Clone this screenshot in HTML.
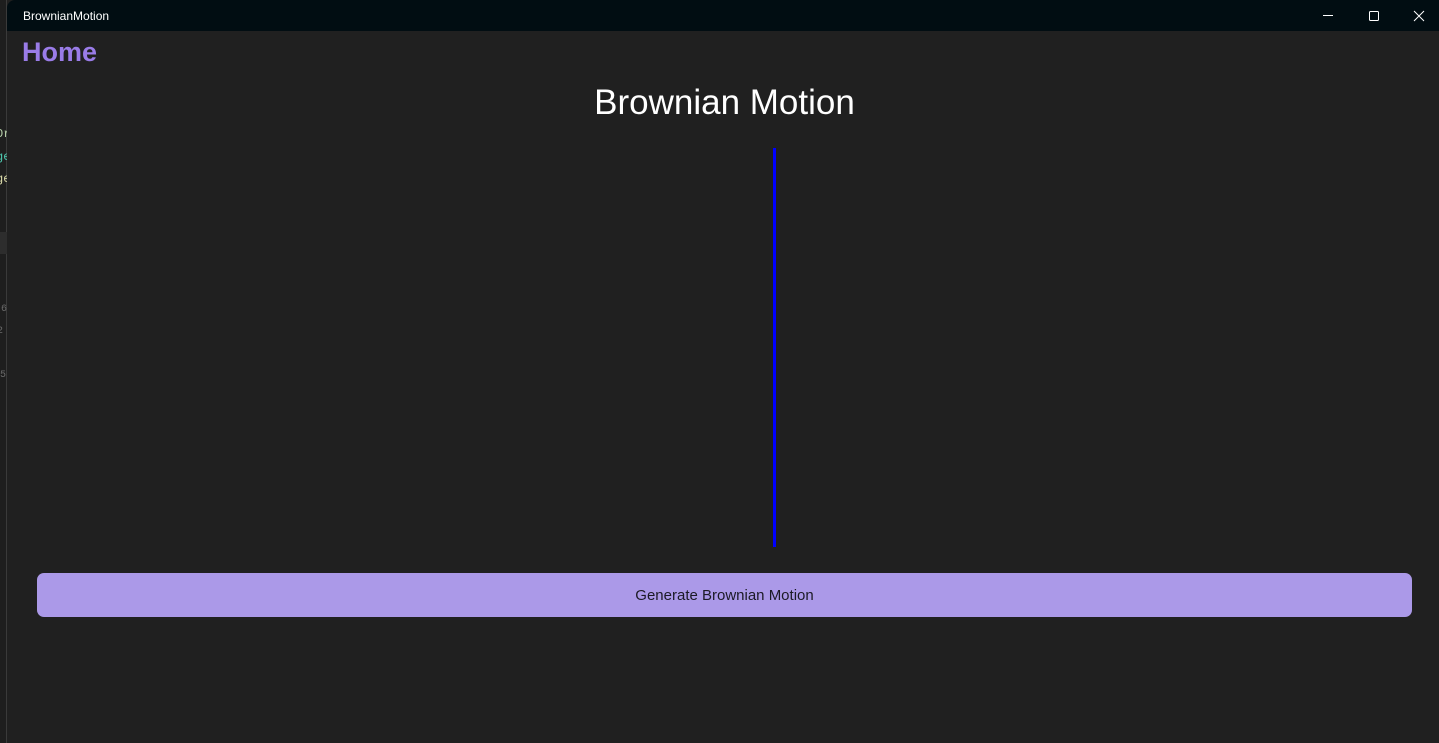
<!DOCTYPE html>
<html><head><style>
*{margin:0;padding:0;box-sizing:border-box}
body{width:1439px;height:743px;background:#1f1f1f;position:relative;overflow:hidden;font-family:"Segoe UI","Liberation Sans","DejaVu Sans",sans-serif}
.left{position:absolute;left:0;top:0;width:7px;height:743px;background:#1e1e1e;border-right:1px solid #3a3a3a}
.win{position:absolute;left:7px;top:0;right:0;bottom:0;background:#202020;border-top-left-radius:8px;overflow:hidden}
.tb{height:31px;background:#010d12;position:relative}
.tb span{position:absolute;left:16px;top:9px;color:#fff;font-size:12px}
.sm{position:absolute;font-size:12px;font-family:"Liberation Mono",monospace}
</style></head><body>
<div class="left">
<div class="sm" style="top:127px;left:-4px;color:#b5cea8">Or</div>
<div class="sm" style="top:150px;left:-4px;color:#4ec9b0">ge</div>
<div class="sm" style="top:172px;left:-4px;color:#dcdcaa">ge</div>
<div style="position:absolute;top:232px;left:0;width:7px;height:22px;background:#2d2d2d"></div>
<div class="sm" style="top:304px;left:1px;color:#6a6a6a;font-size:10px">6</div>
<div class="sm" style="top:326px;left:-3px;color:#6a6a6a;font-size:10px">2</div>
<div class="sm" style="top:370px;left:0;color:#6a6a6a;font-size:10px">5</div>
</div>
<div class="win">
<div class="tb"><span>BrownianMotion</span>
<svg style="position:absolute;left:1314px;top:8px" width="120" height="16" viewBox="0 0 120 16">
<line x1="2" y1="7.5" x2="12" y2="7.5" stroke="#fff" stroke-width="1"/>
<rect x="48.5" y="3.5" width="9" height="9" rx="1" fill="none" stroke="#fff" stroke-width="1"/>
<path d="M93 3 L103 13 M103 3 L93 13" stroke="#fff" stroke-width="1"/>
</svg></div>
<div style="position:absolute;left:15px;top:37px;color:#9a7ce8;font-size:27px;font-weight:600">Home</div>
<div style="position:absolute;left:0;width:1435px;top:83px;text-align:center;color:#fff;font-size:35px">Brownian Motion</div>
<div style="position:absolute;left:766px;top:148px;width:3px;height:399px;background:#0000ff"></div>
<div style="position:absolute;left:30px;top:573px;width:1375px;height:44px;background:#ab99e8;border-radius:7px;text-align:center;line-height:46px;color:#1c1a26;font-size:15px">Generate Brownian Motion</div>
</div>
</body></html>
